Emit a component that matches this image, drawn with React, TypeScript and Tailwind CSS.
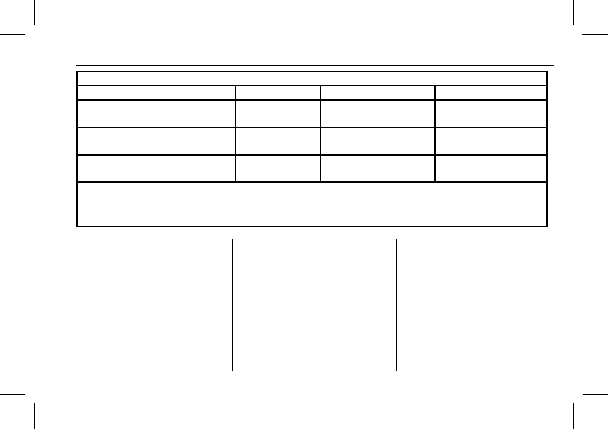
import React from 'react'

// Print page: crop marks at the corners, a ruled header, an empty bordered
// spec table and a three-column text area with vertical rules.

type Mark = { x: string; y: string }

const marks: Mark[] = [
  { x: 'left-[34px] top-0 w-px h-[25px]', y: 'left-0 top-[34px] w-[25px] h-px' },
  { x: 'left-[573px] top-0 w-px h-[25px]', y: 'left-[582px] top-[34px] w-[26px] h-px' },
  { x: 'left-[34px] top-[403px] w-px h-[26px]', y: 'left-0 top-[394px] w-[25px] h-px' },
  { x: 'left-[573px] top-[403px] w-px h-[26px]', y: 'left-[583px] top-[394px] w-[25px] h-px' },
]

function CropMarks() {
  return (
    <>
      {marks.map((m, i) => (
        <React.Fragment key={i}>
          <div className={`absolute bg-black ${m.x}`} />
          <div className={`absolute bg-black ${m.y}`} />
        </React.Fragment>
      ))}
    </>
  )
}

function Row({ height, bottom }: { height: string; bottom: string }) {
  return (
    <div className={`grid grid-cols-[158px_85px_115px_1fr] ${bottom}`}>
      <div className={`${height} border-r border-black`} />
      <div className={`${height} border-r border-black`} />
      <div className={`${height} border-r-2 border-black`} />
      <div className={height} />
    </div>
  )
}

function SpecTable() {
  return (
    <div className="w-[472px] border-t border-b border-l-2 border-r-2 border-black">
      <div className="h-[14px] border-b border-black" />
      <Row height="h-[13px]" bottom="border-b-2 border-black" />
      <Row height="h-[26px]" bottom="border-b border-black" />
      <Row height="h-[26px]" bottom="border-b-2 border-black" />
      <Row height="h-[25px]" bottom="border-b-2 border-black" />
      <div className="h-[43px]" />
    </div>
  )
}

export default function App() {
  return (
    <div className="relative w-[608px] h-[429px] bg-white overflow-hidden font-['Liberation_Sans',sans-serif]">
      <CropMarks />
      <div className="flex flex-col pt-[65px] pl-[76px]">
        <div className="w-[478px] h-px bg-black" />
        <div className="mt-[5px]">
          <SpecTable />
        </div>
        <div className="mt-[12px] flex h-[132px]">
          <div className="w-[157px] border-r border-black" />
          <div className="w-[164px] border-r border-black" />
          <div className="flex-1" />
        </div>
      </div>
    </div>
  )
}
